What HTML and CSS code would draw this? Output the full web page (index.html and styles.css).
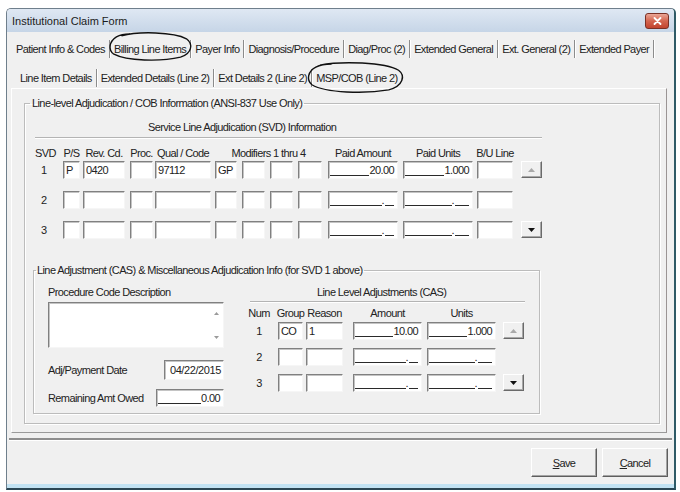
FILE: index.html
```html
<!DOCTYPE html>
<html lang="en">
<head>
<meta charset="utf-8">
<title>Institutional Claim Form</title>
<link rel="stylesheet" href="styles.css">
</head>
<body>
<div class="window">
  <div class="titlebar">
    <span class="title">Institutional Claim Form</span>
    <span class="close"><svg width="9" height="8" viewBox="0 0 9 8"><path d="M1.5 1 L7.5 7 M7.5 1 L1.5 7" stroke="#fff" stroke-width="1.8" stroke-linecap="round"/></svg></span>
  </div>

  <div class="tabs main-tabs">
    <span class="tab">Patient Info &amp; Codes</span>
    <span class="tab circled">Billing Line Items<svg class="ring ring-a" viewBox="0 0 100 30" preserveAspectRatio="none"><path d="M16 4 C36 -1 78 0 93 7 C101 12 100 22 86 26 C62 31 22 30 7 23 C0 19 1 10 10 5 C14 3 20 2 26 2" fill="none" stroke="#111" stroke-width="1.4" vector-effect="non-scaling-stroke"/></svg></span>
    <span class="tab">Payer Info</span>
    <span class="tab">Diagnosis/Procedure</span>
    <span class="tab">Diag/Proc (2)</span>
    <span class="tab">Extended General</span>
    <span class="tab">Ext. General (2)</span>
    <span class="tab">Extended Payer</span>
  </div>

  <div class="tabs sub-tabs">
    <span class="tab">Line Item Details</span>
    <span class="tab">Extended Details (Line 2)</span>
    <span class="tab">Ext Details 2 (Line 2)</span>
    <span class="tab last circled">MSP/COB (Line 2)<svg class="ring ring-b" viewBox="0 0 100 30" preserveAspectRatio="none"><path d="M14 3 C36 -1 80 0 94 8 C101 13 99 23 84 27 C60 31 20 30 6 22 C0 17 2 9 10 5 C14 3 20 2 26 2" fill="none" stroke="#111" stroke-width="1.4" vector-effect="non-scaling-stroke"/></svg></span>
  </div>

  <div class="panel">
    <fieldset class="group outer">
      <legend>Line-level Adjudication / COB Information (ANSI-837 Use Only)</legend>
      <div class="svd-title">Service Line Adjudication (SVD) Information</div>

      <div class="svd-grid">
        <span class="hd hd-left c-svd">SVD</span>
        <span class="hd c-ps">P/S</span>
        <span class="hd c-rev">Rev. Cd.</span>
        <span class="hd c-proc">Proc.</span>
        <span class="hd c-qual">Qual / Code</span>
        <span class="hd c-mods">Modifiers 1 thru 4</span>
        <span class="hd c-amt">Paid Amount</span>
        <span class="hd c-unt">Paid Units</span>
        <span class="hd c-bu">B/U Line</span>

        <span class="num c-svd">1</span>
        <span class="box c-ps">P</span>
        <span class="box c-rev">0420</span>
        <span class="box c-proc"></span>
        <span class="box c-qual">97112</span>
        <span class="box c-m1">GP</span>
        <span class="box c-m2"></span>
        <span class="box c-m3"></span>
        <span class="box c-m4"></span>
        <span class="box mask c-amt"><span class="fill"></span><span>20.00</span></span>
        <span class="box mask c-unt"><span class="fill"></span><span>1.000</span></span>
        <span class="box c-bu"></span>
        <span class="spin c-btn"><svg width="7" height="4" viewBox="0 0 7 4"><polygon points="0,4 3.5,0 7,4" fill="#a9a9a9"/></svg></span>

        <span class="num c-svd">2</span>
        <span class="box c-ps"></span>
        <span class="box c-rev"></span>
        <span class="box c-proc"></span>
        <span class="box c-qual"></span>
        <span class="box c-m1"></span>
        <span class="box c-m2"></span>
        <span class="box c-m3"></span>
        <span class="box c-m4"></span>
        <span class="box mask c-amt"><span class="fill"></span><span>.</span><span class="fill dec2"></span></span>
        <span class="box mask c-unt"><span class="fill"></span><span>.</span><span class="fill dec3"></span></span>
        <span class="box c-bu"></span>

        <span class="num c-svd">3</span>
        <span class="box c-ps"></span>
        <span class="box c-rev"></span>
        <span class="box c-proc"></span>
        <span class="box c-qual"></span>
        <span class="box c-m1"></span>
        <span class="box c-m2"></span>
        <span class="box c-m3"></span>
        <span class="box c-m4"></span>
        <span class="box mask c-amt"><span class="fill"></span><span>.</span><span class="fill dec2"></span></span>
        <span class="box mask c-unt"><span class="fill"></span><span>.</span><span class="fill dec3"></span></span>
        <span class="box c-bu"></span>
        <span class="spin c-btn"><svg width="7" height="4" viewBox="0 0 7 4"><polygon points="0,0 7,0 3.5,4" fill="#111"/></svg></span>
      </div>

      <fieldset class="group inner">
        <legend>Line Adjustment (CAS) &amp; Miscellaneous Adjudication Info (for SVD 1 above)</legend>
        <div class="inner-cols">
          <div class="left-col">
            <div class="lbl">Procedure Code Description</div>
            <div class="textarea">
              <div class="scroll">
                <svg width="5" height="3" viewBox="0 0 5 3"><polygon points="0,3 2.5,0 5,3" fill="#9a9a9a"/></svg>
                <svg width="5" height="3" viewBox="0 0 5 3"><polygon points="0,0 5,0 2.5,3" fill="#9a9a9a"/></svg>
              </div>
            </div>
            <div class="field-row date-row">
              <span>Adj/Payment Date</span>
              <span class="box date">04/22/2015</span>
            </div>
            <div class="field-row owed-row">
              <span>Remaining Amt Owed</span>
              <span class="box mask owed"><span class="fill"></span><span>0.00</span></span>
            </div>
          </div>

          <div class="right-col">
            <div class="cas-title">Line Level Adjustments (CAS)</div>
            <div class="cas-grid">
              <span class="hd k-num">Num</span>
              <span class="hd k-grp">Group</span>
              <span class="hd k-rsn">Reason</span>
              <span class="hd k-amt">Amount</span>
              <span class="hd k-unt">Units</span>

              <span class="num k-num">1</span>
              <span class="box k-grp">CO</span>
              <span class="box k-rsn">1</span>
              <span class="box mask k-amt"><span class="fill"></span><span>10.00</span></span>
              <span class="box mask k-unt"><span class="fill"></span><span>1.000</span></span>
              <span class="spin k-btn"><svg width="7" height="4" viewBox="0 0 7 4"><polygon points="0,4 3.5,0 7,4" fill="#a9a9a9"/></svg></span>

              <span class="num k-num">2</span>
              <span class="box k-grp"></span>
              <span class="box k-rsn"></span>
              <span class="box mask k-amt"><span class="fill"></span><span>.</span><span class="fill dec2"></span></span>
              <span class="box mask k-unt"><span class="fill"></span><span>.</span><span class="fill dec3"></span></span>

              <span class="num k-num">3</span>
              <span class="box k-grp"></span>
              <span class="box k-rsn"></span>
              <span class="box mask k-amt"><span class="fill"></span><span>.</span><span class="fill dec2"></span></span>
              <span class="box mask k-unt"><span class="fill"></span><span>.</span><span class="fill dec3"></span></span>
              <span class="spin k-btn"><svg width="7" height="4" viewBox="0 0 7 4"><polygon points="0,0 7,0 3.5,4" fill="#111"/></svg></span>
            </div>
          </div>
        </div>
      </fieldset>
    </fieldset>
  </div>

  <div class="separator"></div>

  <div class="actions">
    <span class="btn"><u>S</u>ave</span>
    <span class="btn"><u>C</u>ancel</span>
  </div>
  <div class="bottom-strip"></div>
</div>
</body>
</html>
```

FILE: styles.css
```css
* {
  box-sizing: border-box;
}

body {
  margin: 0;
  background: #ffffff;
  font-family: "Liberation Sans", Arial, sans-serif;
  font-size: 11px;
  letter-spacing: -0.6px;
  color: #222222;
}

.window {
  margin: 8px 0 0 6px;
  width: 670px;
  height: 482px;
  display: flex;
  flex-direction: column;
  background: #f0f0f0;
  border: 1px solid #6f7f8c;
  border-right: 2px solid #2f5a66;
  border-bottom: 2px solid #2b4654;
  border-radius: 5px 5px 0 0;
  overflow: hidden;
}

/* ---------- title bar ---------- */
.titlebar {
  flex: none;
  height: 23px;
  display: flex;
  align-items: center;
  justify-content: space-between;
  padding: 0 5px 0 5px;
  background: linear-gradient(#dfe8f3, #c6d5e7);
}

.title {
  font-size: 11px;
  letter-spacing: 0;
  color: #1b1b1b;
}

.close {
  width: 24px;
  height: 16px;
  border: 1px solid #7a3126;
  border-radius: 3px;
  background: linear-gradient(#eaa696, #d4654f 50%, #c2442f);
  display: flex;
  align-items: center;
  justify-content: center;
}

/* ---------- tabs ---------- */
.tabs {
  flex: none;
  display: flex;
  height: 18px;
}

.main-tabs {
  margin-top: 8px;
  padding-left: 5px;
}

.sub-tabs {
  margin-top: 11px;
  padding-left: 9px;
}

.tab {
  height: 18px;
  line-height: 18px;
  padding: 0 4px;
  white-space: nowrap;
  border-right: 1px solid #8c8c8c;
  box-shadow: 1px 0 0 #ffffff;
}

.tab.last {
  border-right: none;
  box-shadow: none;
}

.circled {
  position: relative;
}

.ring {
  position: absolute;
  overflow: visible;
  pointer-events: none;
}

.ring-a {
  left: -2px;
  top: -8px;
  width: calc(100% + 4px);
  height: 29px;
}

.ring-b {
  left: -6px;
  top: -7px;
  width: calc(100% + 9px);
  height: 31px;
}

/* ---------- tab page ---------- */
.panel {
  flex: none;
  margin: 1px 7px 0 4px;
  padding: 7px 6px 8px 12px;
  border: 1px solid;
  border-color: #ffffff #9a9494 #9a9a9a #ffffff;
}

.group {
  margin: 0;
  min-width: 0;
  border: 1px solid #bcbcbc;
  box-shadow: inset 1px 1px 0 #ffffff, 1px 1px 0 #ffffff;
}

.group legend {
  line-height: 14px;
  white-space: nowrap;
}

.outer {
  padding: 0 6px 9px 8px;
}

.outer > legend {
  margin-left: -3px;
  padding: 0 2px;
}

.svd-title {
  margin: 10px 0 0 2px;
  width: 507px;
  height: 18px;
  line-height: 14px;
  padding: 0 0 3px 113px;
  border-bottom: 1px solid #b4b4b4;
  box-shadow: 0 1px 0 #ffffff;
  white-space: nowrap;
}

/* ---------- SVD grid ---------- */
.svd-grid {
  display: grid;
  grid-template-columns:
    [svd] 23px 5px [ps] 17px 3px [rev] 42px 5px [proc] 23px 2px [qual] 56px 4px
    [m1] 22px 5px [m2] 23px 5px [m3] 23px 5px [m4] 24px 6px
    [amt] 70px 5px [unt] 70px 4px [bu] 36px 8px [btn] 21px;
  grid-template-rows: 16px repeat(3, 30px);
  align-items: start;
  margin: 6px 0 0 2px;
}

.c-svd { grid-column: svd; }
.c-ps { grid-column: ps; }
.c-rev { grid-column: rev; }
.c-proc { grid-column: proc; }
.c-qual { grid-column: qual; }
.c-mods { grid-column: m1 / span 7; }
.c-m1 { grid-column: m1; }
.c-m2 { grid-column: m2; }
.c-m3 { grid-column: m3; }
.c-m4 { grid-column: m4; }
.c-amt { grid-column: amt; }
.c-unt { grid-column: unt; }
.c-bu { grid-column: bu; }
.c-btn { grid-column: btn; }

.hd {
  align-self: end;
  justify-self: center;
  white-space: nowrap;
  line-height: 14px;
}

.hd-left {
  justify-self: start;
}

.num {
  margin-top: 1px;
  line-height: 18px;
  padding-left: 6px;
}

.box {
  display: block;
  height: 18px;
  margin-top: 1px;
  line-height: 16px;
  padding: 0 2px;
  background: #ffffff;
  border: 1px solid;
  border-color: #808080 #f6f6f6 #f6f6f6 #808080;
  box-shadow: inset 1px 1px 0 #c4c4c4;
  white-space: nowrap;
  overflow: hidden;
}

.mask {
  display: flex;
  align-items: flex-start;
  padding: 0 3px 0 1px;
}

.fill {
  flex: 1;
  height: 14px;
  border-bottom: 1px solid #2a2a2a;
}

.fill.dec2 {
  flex: none;
  width: 9px;
  margin-left: 1px;
}

.fill.dec3 {
  flex: none;
  width: 14px;
  margin-left: 1px;
}

.spin {
  width: 21px;
  height: 17px;
  margin-top: 1px;
  display: flex;
  align-items: center;
  justify-content: center;
  background: #f0f0f0;
  border: 1px solid;
  border-color: #ffffff #6a6a6a #6a6a6a #ffffff;
  box-shadow: inset -1px -1px 0 #a8a8a8;
}

/* ---------- inner group ---------- */
.inner {
  margin-top: 13px;
  width: 507px;
  padding: 0 14px 6px 14px;
}

.inner > legend {
  margin-left: -12px;
  padding: 0 1px;
}

.inner-cols {
  display: flex;
  gap: 26px;
}

.left-col {
  width: 176px;
  display: flex;
  flex-direction: column;
}

.lbl {
  margin-top: 8px;
  line-height: 14px;
  white-space: nowrap;
}

.textarea {
  margin-top: 3px;
  height: 46px;
  display: flex;
  justify-content: flex-end;
  background: #ffffff;
  border: 1px solid;
  border-color: #808080 #f6f6f6 #f6f6f6 #808080;
  box-shadow: inset 1px 1px 0 #c4c4c4;
}

.scroll {
  width: 13px;
  display: flex;
  flex-direction: column;
  justify-content: space-between;
  align-items: center;
  padding: 9px 0 8px;
}

.field-row {
  display: flex;
  align-items: center;
  justify-content: space-between;
  white-space: nowrap;
}

.date-row {
  margin-top: 12px;
}

.owed-row {
  margin-top: 9px;
}

.date {
  width: 60px;
  height: 20px;
  line-height: 18px;
  text-align: right;
  margin: 0;
  letter-spacing: -0.4px;
}

.owed {
  width: 68px;
  margin: 0;
}

.right-col {
  width: 275px;
}

.cas-title {
  margin-top: 8px;
  height: 17px;
  line-height: 14px;
  padding-left: 67px;
  border-bottom: 1px solid #b4b4b4;
  box-shadow: 0 1px 0 #ffffff;
  white-space: nowrap;
}

.cas-grid {
  display: grid;
  grid-template-columns:
    [num] 18px 10px [grp] 25px 3px [rsn] 37px 10px [amt] 69px 5px [unt] 69px 7px [btn] 21px;
  grid-template-rows: 18px repeat(3, 26px);
  align-items: start;
}

.k-num { grid-column: num; }
.k-grp { grid-column: grp; }
.k-rsn { grid-column: rsn; }
.k-amt { grid-column: amt; }
.k-unt { grid-column: unt; }
.k-btn { grid-column: btn; }

.cas-grid .num {
  padding-left: 0;
  justify-self: center;
  margin-top: 2px;
}

.cas-grid .box,
.cas-grid .spin {
  margin-top: 2px;
}

/* ---------- bottom ---------- */
.separator {
  flex: none;
  margin: 5px 2px 0 2px;
  height: 3px;
  border-top: 2px solid #8e8e8e;
  border-bottom: 1px solid #ffffff;
}

.actions {
  flex: 1;
  display: flex;
  justify-content: flex-end;
  align-items: flex-start;
  gap: 5px;
  padding: 7px 6px 0 0;
}

.btn {
  width: 66px;
  height: 29px;
  display: flex;
  align-items: center;
  justify-content: center;
  background: #f0f0f0;
  border: 1px solid;
  border-color: #ffffff #5e5e5e #5e5e5e #ffffff;
  box-shadow: inset -1px -1px 0 #a4a4a4;
}

.bottom-strip {
  flex: none;
  height: 4px;
  background: #c2e2f2;
}
```
